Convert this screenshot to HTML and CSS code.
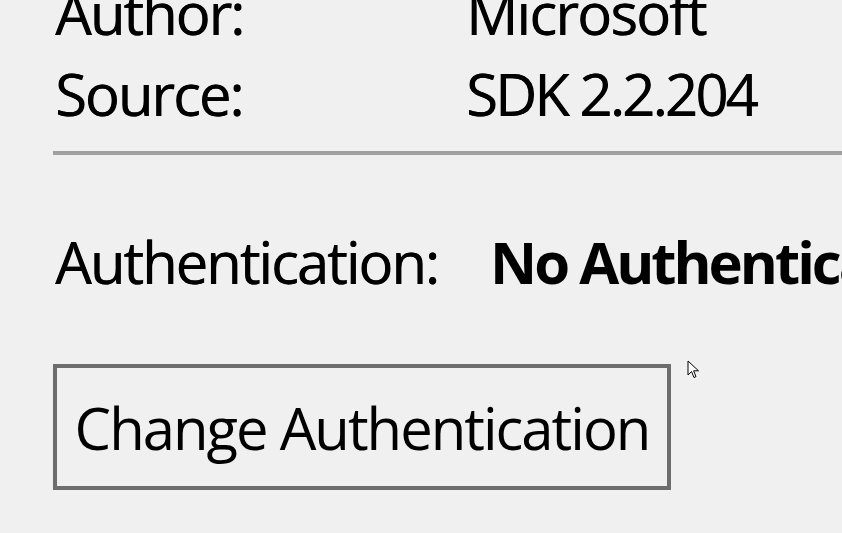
FILE: index.html
```html
<!DOCTYPE html>
<html>
<head>
<meta charset="utf-8">
<link rel="stylesheet" href="styles.css">
</head>
<body>
<div class="panel">
  <div class="info">
    <div class="row"><span class="label">Author:</span><span class="value">Microsoft</span></div>
    <div class="row"><span class="label">Source:</span><span class="value value-num">SDK 2.2.204</span></div>
  </div>
  <div class="sep"></div>
  <div class="auth"><span class="auth-label">Authentication:</span><span class="auth-value">No Authentication</span></div>
  <div class="actions">
    <button class="btn">Change Authentication</button>
    <svg class="cursor" width="13" height="20" viewBox="0 0 13 20"><path d="M1 1 L1 15 L4.5 11.5 L7 17.5 L9 16.6 L6.6 10.8 L11.5 10.8 Z" fill="#fff" stroke="#000" stroke-width="1" stroke-linejoin="miter"/></svg>
  </div>
</div>
</body>
</html>
```
FILE: styles.css
```css
html, body {
  margin: 0;
  padding: 0;
  background: #f0f0f0;
  overflow: hidden;
  width: 842px;
  height: 533px;
}
.panel {
  font-family: "Open Sans", "Noto Sans", sans-serif;
  font-size: 58px;
  line-height: 81px;
  letter-spacing: -2px;
  color: #000;
  padding-left: 55px;
  margin-top: -28px;
  text-shadow: 0.5px 0 0 #000;
}
.row {
  display: flex;
  white-space: nowrap;
}
.label {
  width: 411px;
  flex: none;
}
.value {
  letter-spacing: -1.8px;
}
.value-num {
  letter-spacing: -2.8px;
}
.sep {
  margin-left: -2px;
  height: 4px;
  background: #a0a0a0;
  margin-top: 17px;
}
.auth {
  margin-top: 66px;
  display: flex;
  white-space: nowrap;
}
.auth-label {
  width: 435px;
  flex: none;
}
.auth-value {
  font-weight: 700;
  letter-spacing: -3px;
  text-shadow: none;
}
.actions {
  margin-top: 62px;
  margin-left: -2px;
  display: flex;
  align-items: flex-start;
}
.btn {
  font: inherit;
  letter-spacing: inherit;
  color: #000;
  width: 618px;
  height: 126px;
  border: 4px solid #6d6d6d;
  background: #f0f0f0;
  padding: 19px 0 18px;
  text-align: center;
  white-space: nowrap;
  box-sizing: border-box;
}
.cursor {
  margin-left: 16px;
  margin-top: -4px;
}
```
